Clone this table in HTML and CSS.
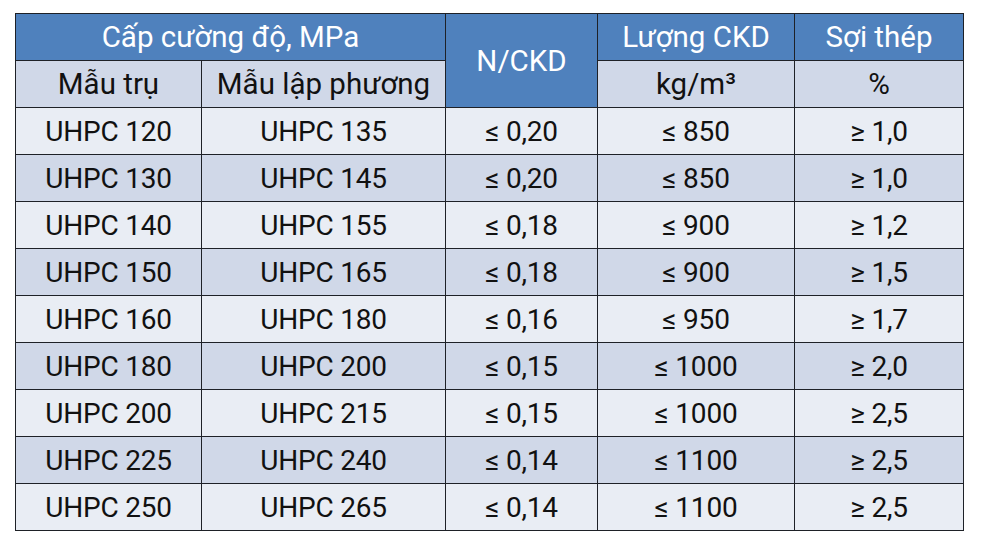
FILE: index.html
```html
<!DOCTYPE html>
<html lang="vi">
<head>
<meta charset="utf-8">
<title>UHPC</title>
<link rel="stylesheet" href="styles.css">
</head>
<body>
<div class="page">
  <div class="grid">
    <div class="c h span2">Cấp cường độ, MPa</div>
    <div class="c h rspan2">N/CKD</div>
    <div class="c h">Lượng CKD</div>
    <div class="c h">Sợi thép</div>
    <div class="c s">Mẫu trụ</div>
    <div class="c s">Mẫu lập phương</div>
    <div class="c s">kg/m³</div>
    <div class="c s">%</div>

    <div class="c a">UHPC 120</div><div class="c a">UHPC 135</div><div class="c a">≤ 0,20</div><div class="c a">≤ 850</div><div class="c a">≥ 1,0</div>
    <div class="c b">UHPC 130</div><div class="c b">UHPC 145</div><div class="c b">≤ 0,20</div><div class="c b">≤ 850</div><div class="c b">≥ 1,0</div>
    <div class="c a">UHPC 140</div><div class="c a">UHPC 155</div><div class="c a">≤ 0,18</div><div class="c a">≤ 900</div><div class="c a">≥ 1,2</div>
    <div class="c b">UHPC 150</div><div class="c b">UHPC 165</div><div class="c b">≤ 0,18</div><div class="c b">≤ 900</div><div class="c b">≥ 1,5</div>
    <div class="c a">UHPC 160</div><div class="c a">UHPC 180</div><div class="c a">≤ 0,16</div><div class="c a">≤ 950</div><div class="c a">≥ 1,7</div>
    <div class="c b">UHPC 180</div><div class="c b">UHPC 200</div><div class="c b">≤ 0,15</div><div class="c b">≤ 1000</div><div class="c b">≥ 2,0</div>
    <div class="c a">UHPC 200</div><div class="c a">UHPC 215</div><div class="c a">≤ 0,15</div><div class="c a">≤ 1000</div><div class="c a">≥ 2,5</div>
    <div class="c b">UHPC 225</div><div class="c b">UHPC 240</div><div class="c b">≤ 0,14</div><div class="c b">≤ 1100</div><div class="c b">≥ 2,5</div>
    <div class="c a">UHPC 250</div><div class="c a">UHPC 265</div><div class="c a">≤ 0,14</div><div class="c a">≤ 1100</div><div class="c a">≥ 2,5</div>
  </div>
</div>
</body>
</html>
```
FILE: styles.css
```css
html, body {
  margin: 0;
  padding: 0;
  background: #ffffff;
}
.page {
  padding: 13px 0 0 15px;
}
.grid {
  display: grid;
  grid-template-columns: 185px 243px 151px 196px 168px;
  grid-template-rows: repeat(11, 46px);
  gap: 1px;
  padding: 1px;
  width: max-content;
  background: #1e2127;
  font-family: Roboto, "Liberation Sans", sans-serif;
  font-size: 28px;
  letter-spacing: -0.2px;
  color: #111111;
}
.c {
  display: flex;
  align-items: center;
  justify-content: center;
  white-space: nowrap;
}
.h {
  background: #4f81bd;
  color: #ffffff;
  font-size: 29.5px;
  letter-spacing: 0;
}
.s {
  background: #d0d8e8;
  font-size: 29.5px;
  letter-spacing: 0;
}
.a { background: #e9edf4; }
.b { background: #d0d8e8; }
.span2 { grid-column: span 2; }
.rspan2 { grid-row: span 2; }
```
